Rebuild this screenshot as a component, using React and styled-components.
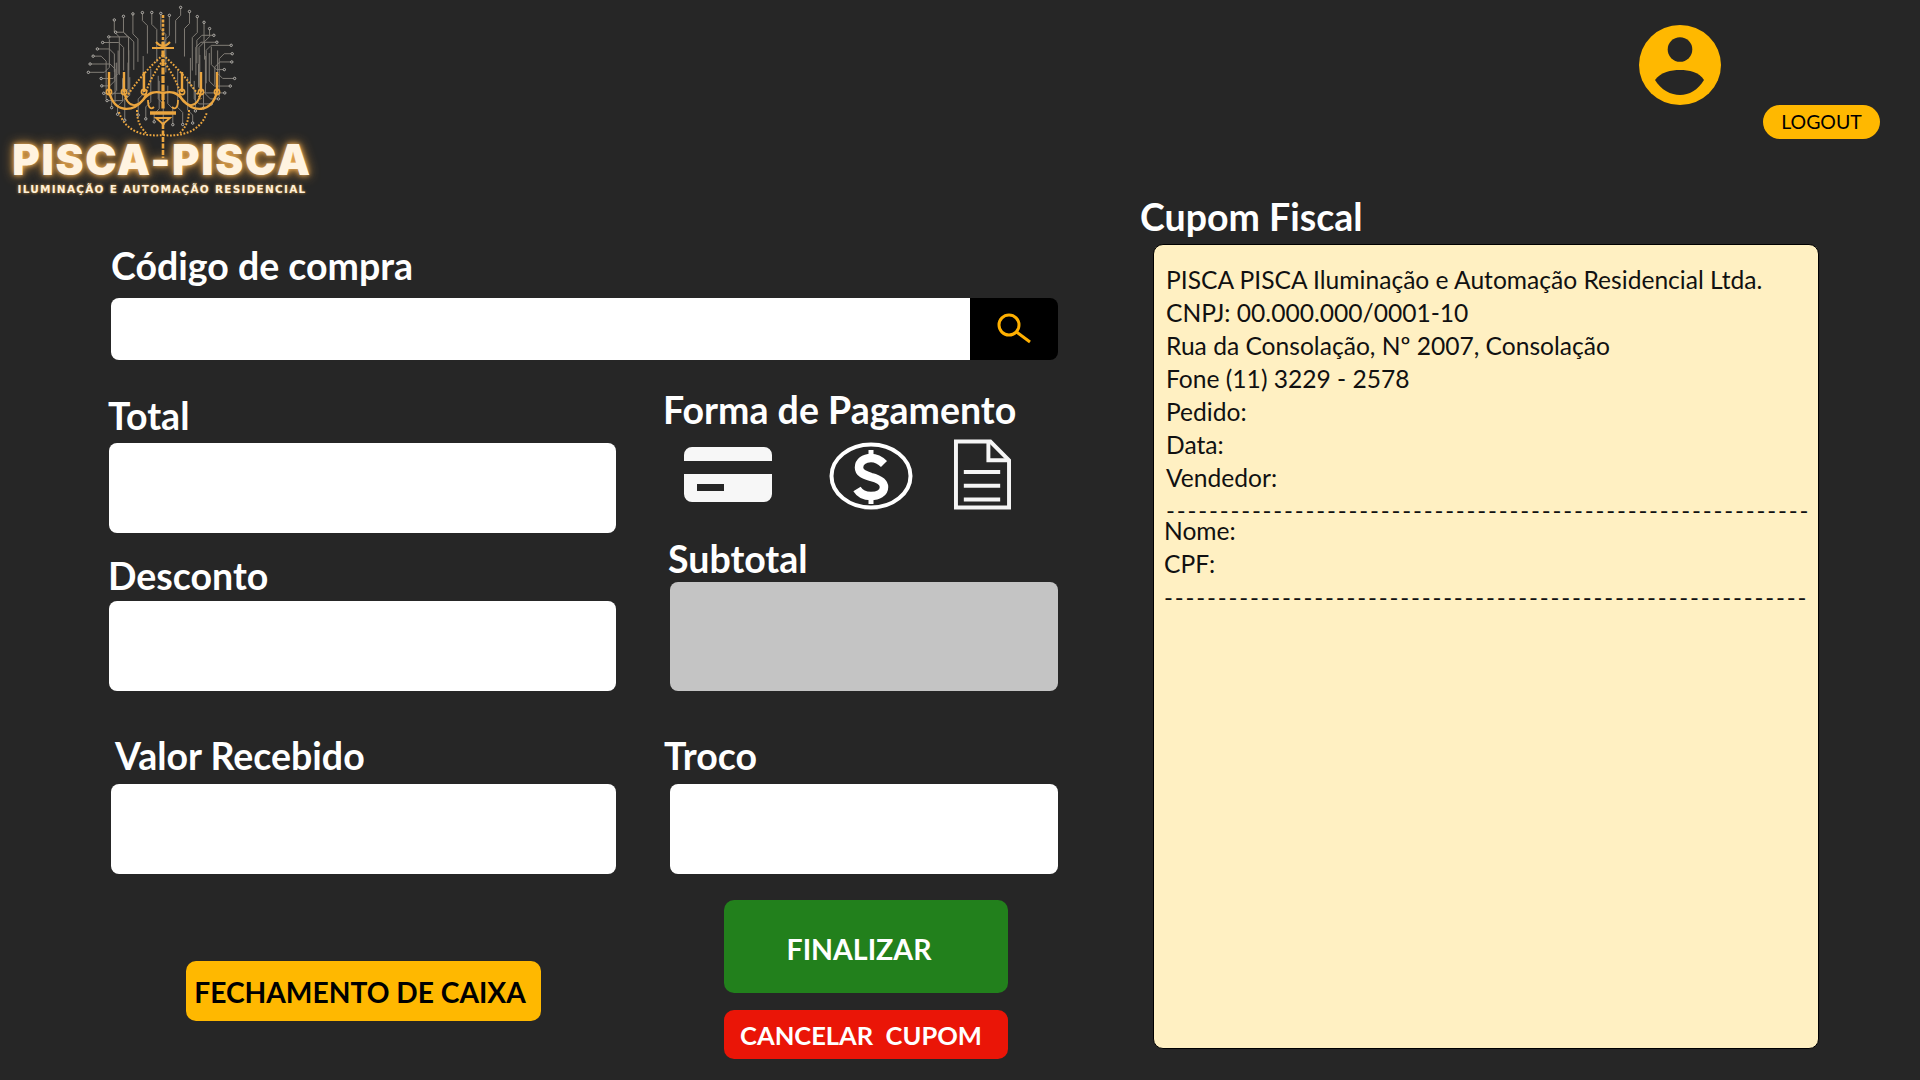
import React from 'react'
import styled, { createGlobalStyle } from 'styled-components'

const GlobalStyle = createGlobalStyle`
  html, body { margin: 0; padding: 0; background: #262626; }
  * { box-sizing: border-box; }
`

const FONT = `Lato, "Noto Sans", sans-serif`

const Page = styled.div`
  width: 1920px;
  height: 1080px;
  background: #262626;
  font-family: ${FONT};
  display: flex;
  overflow: hidden;
`
const LeftSide = styled.main`
  width: 1130px;
  flex: none;
`
const RightSide = styled.aside`
  flex: 1;
`

/* logo */
const Logo = styled.div`
  width: 298px;
  height: 246px;
  margin-left: 13px;
  display: flex;
  flex-direction: column;
  align-items: center;
`
const LogoArt = styled.svg`
  width: 160px;
  height: 165px;
  flex: none;
`
const LogoName = styled.div`
  margin-top: -24px;
  font-family: Inter, "Liberation Sans", sans-serif;
  font-weight: 900;
  font-size: 42px;
  line-height: 38px;
  letter-spacing: 1.7px;
  white-space: nowrap;
  color: #fff3e0;
  text-shadow: 0 0 5px #f5b45c, 0 0 12px #e09a3c;
  position: relative;
`
const LogoTagline = styled.div`
  margin-top: 3px;
  font-family: "DejaVu Sans", sans-serif;
  font-weight: 700;
  font-size: 10.500px;
  line-height: 14px;
  letter-spacing: 1.250px;
  white-space: nowrap;
  color: #fff0d8;
  text-shadow: 0 0 3px #d99a45;
`

/* form */
const Form = styled.form`
  margin: 0 0 0 108px;
  width: 950px;
`
const Label = styled.div`
  height: 40px;
  line-height: 40px;
  font-size: 37.500px;
  font-weight: 700;
  color: #fff;
  white-space: nowrap;
  margin-left: ${p => p.$indent || 0}px;
  margin-top: ${p => p.$top || 0}px;
`
const SearchBar = styled.div`
  display: flex;
  width: 947px;
  height: 62px;
  margin: 12px 0 0 3px;
  border-radius: 8px;
  overflow: hidden;
`
const SearchInput = styled.input`
  flex: 1;
  min-width: 0;
  border: 0;
  background: #fff;
`
const SearchButton = styled.button`
  width: 88px;
  flex: none;
  border: 0;
  padding: 0;
  background: #000;
  display: flex;
  align-items: center;
  justify-content: center;
`
const Columns = styled.div`
  display: grid;
  grid-template-columns: 555px 395px;
  margin-top: 30px;
`
const Column = styled.div`
  display: flex;
  flex-direction: column;
`
const Box = styled.input`
  display: block;
  height: ${p => p.$height || 90}px;
  width: ${p => p.$width}px;
  margin-left: ${p => p.$indent || 0}px;
  margin-top: ${p => p.$top || 0}px;
  border: 0;
  border-radius: 8px;
  background: ${p => (p.disabled ? '#c4c4c4' : '#fff')};
`
const PayIcons = styled.div`
  display: flex;
  align-items: center;
  height: 71px;
  margin: 9px 0 0 21px;
`
const PayIcon = styled.svg`
  flex: none;
  margin-right: ${p => p.$gap || 0}px;
`
const ActionButton = styled.button`
  display: flex;
  align-items: center;
  justify-content: center;
  border: 0;
  font-family: ${FONT};
  font-weight: 700;
  white-space: nowrap;
  border-radius: 10px;
  background: ${p => p.$bg};
  color: ${p => p.$fg};
  width: ${p => p.$width}px;
  height: ${p => p.$height}px;
  font-size: ${p => p.$size}px;
  margin-left: ${p => p.$indent || 0}px;
  margin-top: ${p => p.$top || 0}px;
  padding: ${p => p.$drop || 0}px ${p => p.$shift || 0}px 0 0;
`

/* right side */
const UserBar = styled.header`
  height: 197px;
  display: flex;
  align-items: flex-start;
  padding: 25px 0 0 509px;
`
const LogoutButton = styled.button`
  width: 117px;
  height: 34px;
  margin: 80px 0 0 42px;
  border: 0;
  padding: 0 0 2px;
  border-radius: 17px;
  background: #ffb800;
  color: #000;
  font-family: ${FONT};
  font-size: 19.500px;
`
const ReceiptTitle = styled.h2`
  margin: 0 0 0 10px;
  height: 40px;
  line-height: 40px;
  font-size: 37.500px;
  font-weight: 700;
  color: #fff;
`
const Receipt = styled.section`
  width: 666px;
  height: 805px;
  margin: 7px 0 0 23px;
  padding: 18px 0 0 12px;
  background: #fff0c2;
  border: 1px solid #000;
  border-radius: 10px;
  color: #111;
  font-size: 24.600px;
`
const ReceiptLine = styled.div`
  height: 33px;
  line-height: 33px;
  white-space: nowrap;
  margin-left: ${p => p.$indent || 0}px;
`
const DashLine = styled.div`
  height: 20px;
  line-height: 31px;
  white-space: nowrap;
  margin-left: ${p => p.$indent || 0}px;
  font-size: 24px;
  letter-spacing: 1.820px;
`
const DashLineLow = styled(DashLine)`
  height: 33px;
  line-height: 33px;
`

const CX = 80
const CY = 67
const traces = Array.from({ length: 46 }, (_, i) => {
  const a = (i / 46) * Math.PI * 2 + 0.05
  const jitter = ((i * 13) % 7) * 1.6
  const R = 52 + jitter
  const ex = CX + Math.cos(a) * R * 1.2
  const ey = CY + Math.sin(a) * R
  const sx = ex < CX ? 1 : -1
  const sy = ey < CY ? 1 : -1
  const len = 8 + ((i * 5) % 4) * 4
  const diag = 5 + ((i * 3) % 3) * 4
  const tail = 18 + ((i * 11) % 5) * 5
  const side = Math.abs(Math.cos(a)) > 0.72
  const pts = side
    ? [[ex, ey], [ex + sx * len, ey], [ex + sx * (len + diag), ey + sy * diag], [ex + sx * (len + diag), ey + sy * (diag + tail)]]
    : [[ex, ey], [ex, ey + sy * len], [ex + sx * diag, ey + sy * (len + diag)], [ex + sx * diag, ey + sy * (len + diag + tail)]]
  return { d: 'M' + pts.map(p => p.join(' ')).join('L'), x: ex, y: ey }
})

const candles = [27, 42, 62, 100, 119, 135]

const Chandelier = () => (
  <LogoArt viewBox="0 0 160 165">
    <g fill="none" stroke="#807c75" strokeWidth="1">
      {traces.map((t, i) => <path key={i} d={t.d} />)}
    </g>
    <g fill="#26262a" stroke="#cfcbc3" strokeWidth="0.8">
      {traces.map((t, i) => <circle key={i} cx={t.x} cy={t.y} r="1.2" />)}
    </g>
    <g fill="none" stroke="#eaa53f">
      <path d="M81 15V42" strokeWidth="2.600" strokeDasharray="3 1.400" />
      <path d="M81 42V110" strokeWidth="3.200" strokeDasharray="7 1.500" />
      <path d="M74 42q7 8 14 0M70 48h22" strokeWidth="2" />
      <path d="M27 92c6 22 24 20 34 8 6-8 12-9 20-7 8-2 14-1 20 7 10 12 28 14 34-8" strokeWidth="2.400" />
      <path d="M42 92c4 20 18 14 22 2M119 92c-4 20-18 14-22 2" strokeWidth="1.800" />
      <path d="M66 100c0 8 3 10 6 7M96 100c0 8-3 10-6 7M81 95v12" strokeWidth="1.800" />
      <path d="M68 113h26" strokeWidth="3.500" />
      <path d="M74 118h14l-7 6z" strokeWidth="1.800" />
      <path d="M81 124v34" strokeWidth="2.600" strokeDasharray="5 1.500" />
      <g strokeWidth="2" strokeDasharray="1.800 1.600">
        <path d="M37 112c6 20 26 25 44 23 18 2 38-3 44-23" />
        <path d="M81 55c-14 12-26 26-38 44M81 55c14 12 26 26 38 44" />
        <path d="M81 60c-8 12-16 24-18 38M81 60c8 12 16 24 18 38" />
        <path d="M55 110c0 12 4 18 10 24M107 110c0 12-4 18-10 24" />
      </g>
      {candles.map(x => <path key={x} d={`M${x} 72V92`} strokeWidth="2.400" />)}
      {candles.map(x => <circle key={x} cx={x} cy="92" r="2.600" strokeWidth="1.600" />)}
    </g>
  </LogoArt>
)

const SearchIcon = () => (
  <svg width="36" height="32" viewBox="0 0 36 32" fill="none" stroke="#ffb000" strokeWidth="3">
    <circle cx="13" cy="12" r="10" />
    <path d="M20.500 19L34 29" />
  </svg>
)

const CardIcon = () => (
  <PayIcon $gap={57} width="88" height="55" viewBox="0 0 88 55">
    <path fill="#f7f7f7" fillRule="evenodd" d="M0 14V8a8 8 0 0 1 8-8h72a8 8 0 0 1 8 8v6zM0 27h88v20a8 8 0 0 1-8 8H8a8 8 0 0 1-8-8zM13 37v7h27v-7z" />
  </PayIcon>
)

const MoneyIcon = () => (
  <PayIcon $gap={41} width="84" height="71" viewBox="0 0 84 71" fill="none" stroke="#fff">
    <ellipse cx="42" cy="37" rx="39.500" ry="31.500" strokeWidth="4" />
    <path d="M55 25C50 20 46 19 42 19C35 19 30 23 30 28.500C30 34 35 36 42 38C50 40 55 43 55 48C55 54 49 57 42 57C36 57 31 55 28 50" strokeWidth="8.500" />
    <path d="M42 11V19M42 57V65" strokeWidth="5" />
  </PayIcon>
)

const DocIcon = () => (
  <PayIcon width="57" height="71" viewBox="0 0 58 71" fill="none" stroke="#f5f5f5" strokeWidth="4">
    <path d="M2 2H37L56 21V69H2z" />
    <path d="M35 2V21H56" />
    <path d="M10 33H47M10 47H47M10 61H47" />
  </PayIcon>
)

const UserIcon = () => (
  <svg width="82" height="80" viewBox="0 0 82 80">
    <ellipse cx="41" cy="40" rx="41" ry="40" fill="#ffb800" />
    <circle cx="41" cy="24.500" r="12.300" fill="#262626" />
    <path fill="#262626" d="M16 55C22 47 32 45 41 45C50 45 60 47 65 55C59 65 50 70 41 70C32 70 22 65 16 55Z" />
  </svg>
)

const DASHES = '-'.repeat(60)

export default function App() {
  return (
    <Page>
      <GlobalStyle />
      <LeftSide>
        <Logo>
          <Chandelier />
          <LogoName>PISCA-PISCA</LogoName>
          <LogoTagline>ILUMINAÇÃO E AUTOMAÇÃO RESIDENCIAL</LogoTagline>
        </Logo>
        <Form>
          <Label $indent={3}>Código de compra</Label>
          <SearchBar>
            <SearchInput />
            <SearchButton type="button"><SearchIcon /></SearchButton>
          </SearchBar>
          <Columns>
            <Column>
              <Label $top={6}>Total</Label>
              <Box $width={507} $indent={1} $top={7} />
              <Label $top={23}>Desconto</Label>
              <Box $width={507} $indent={1} $top={5} />
              <Label $indent={7} $top={45}>Valor Recebido</Label>
              <Box $width={505} $indent={3} $top={8} />
              <ActionButton type="button" $bg="#ffb800" $fg="#000" $width={355} $height={60} $size={28.200} $indent={78} $top={87} $drop={2} $shift={7}>
                FECHAMENTO DE CAIXA
              </ActionButton>
            </Column>
            <Column>
              <Label>Forma de Pagamento</Label>
              <PayIcons>
                <CardIcon />
                <MoneyIcon />
                <DocIcon />
              </PayIcons>
              <Label $indent={5} $top={29}>Subtotal</Label>
              <Box disabled $width={388} $indent={7} $height={109} $top={3} />
              <Label $indent={1} $top={45}>Troco</Label>
              <Box $width={388} $indent={7} $top={8} />
              <ActionButton type="button" $bg="#22801c" $fg="#fff" $width={284} $height={93} $size={28.500} $indent={61} $top={26} $shift={14} $drop={4}>
                FINALIZAR
              </ActionButton>
              <ActionButton type="button" $bg="#ea1507" $fg="#fff" $width={284} $height={49} $size={25.500} $indent={61} $top={17} $shift={10}>
                CANCELAR&nbsp; CUPOM
              </ActionButton>
            </Column>
          </Columns>
        </Form>
      </LeftSide>
      <RightSide>
        <UserBar>
          <UserIcon />
          <LogoutButton type="button">LOGOUT</LogoutButton>
        </UserBar>
        <ReceiptTitle>Cupom Fiscal</ReceiptTitle>
        <Receipt>
          <ReceiptLine>PISCA PISCA Iluminação e Automação Residencial Ltda.</ReceiptLine>
          <ReceiptLine>CNPJ: 00.000.000/0001-10</ReceiptLine>
          <ReceiptLine>Rua da Consolação, Nº 2007, Consolação</ReceiptLine>
          <ReceiptLine>Fone (11) 3229 - 2578</ReceiptLine>
          <ReceiptLine>Pedido:</ReceiptLine>
          <ReceiptLine>Data:</ReceiptLine>
          <ReceiptLine>Vendedor:</ReceiptLine>
          <DashLine>{DASHES}</DashLine>
          <ReceiptLine $indent={-2}>Nome:</ReceiptLine>
          <ReceiptLine $indent={-2}>CPF:</ReceiptLine>
          <DashLineLow $indent={-2}>{DASHES}</DashLineLow>
        </Receipt>
      </RightSide>
    </Page>
  )
}
